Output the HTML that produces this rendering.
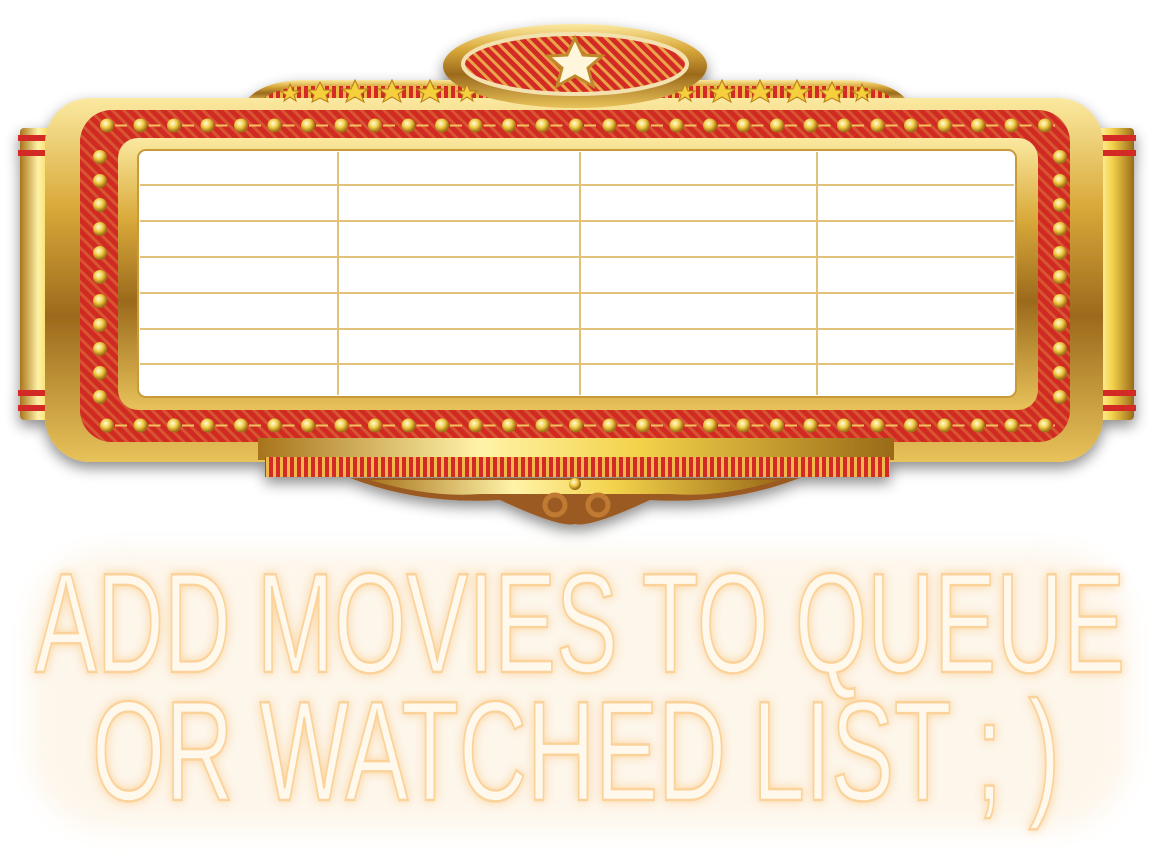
<!DOCTYPE html>
<html><head><meta charset="utf-8"><style>
html,body{margin:0;padding:0;background:#fff;}
svg{display:block}
</style></head><body>
<svg width="1152" height="864" viewBox="0 0 1152 864" xmlns="http://www.w3.org/2000/svg">
<defs>
<linearGradient id="gold" x1="0" y1="0" x2="0" y2="1">
<stop offset="0" stop-color="#fbe9a0"/><stop offset="0.3" stop-color="#d9a93a"/><stop offset="0.6" stop-color="#9c6a1c"/><stop offset="1" stop-color="#e8c25a"/></linearGradient>
<linearGradient id="goldH" x1="0" y1="0" x2="1" y2="0">
<stop offset="0" stop-color="#a8741c"/><stop offset="0.35" stop-color="#fff3a8"/><stop offset="0.6" stop-color="#f3d24a"/><stop offset="1" stop-color="#9a6a18"/></linearGradient>
<radialGradient id="bulb" cx="0.4" cy="0.35" r="0.6"><stop offset="0" stop-color="#fffbe0"/><stop offset="0.5" stop-color="#f2cf4a"/><stop offset="1" stop-color="#a06d12"/></radialGradient>
<pattern id="bh" x="100" y="118" width="33.5" height="15" patternUnits="userSpaceOnUse">
<rect x="15" y="6.5" width="12" height="2" fill="#f5c060"/>
<circle cx="7" cy="7.5" r="7" fill="url(#bulb)"/></pattern>
<pattern id="bv" x="0" y="150" width="40" height="24" patternUnits="userSpaceOnUse">
<circle cx="20" cy="7" r="7" fill="url(#bulb)"/></pattern>
<pattern id="stripes" width="8" height="8" patternUnits="userSpaceOnUse" patternTransform="rotate(-45)">
<rect width="8" height="8" fill="#d42b25"/><rect width="3" height="8" fill="#e9a44a"/></pattern>
<pattern id="vstr" width="7" height="10" patternUnits="userSpaceOnUse">
<rect width="7" height="10" fill="#d42b25"/><rect width="3" height="10" fill="#f0b848"/></pattern>
<filter id="sh" x="-10%" y="-10%" width="120%" height="130%"><feDropShadow dx="0" dy="6" stdDeviation="7" flood-color="#000" flood-opacity="0.45"/></filter>
<filter id="glow" x="-10%" y="-30%" width="120%" height="160%"><feGaussianBlur stdDeviation="12"/></filter>
</defs>

<rect x="30" y="550" width="1100" height="280" rx="80" fill="#fdf3e3" filter="url(#glow)" opacity="0.7"/>

<g filter="url(#sh)">
<path d="M245 102 Q260 82 300 80 L850 80 Q895 82 908 102 Z" fill="url(#gold)"/>
<path d="M262 100 Q275 88 305 86 L845 86 Q885 88 893 100 Z" fill="url(#vstr)"/>
<rect x="20" y="128" width="52" height="292" rx="4" fill="url(#goldH)"/>
<rect x="1080" y="128" width="54" height="292" rx="4" fill="url(#goldH)"/>
<rect x="18" y="135" width="56" height="6" fill="#d42b25"/><rect x="18" y="150" width="56" height="6" fill="#d42b25"/>
<rect x="18" y="390" width="56" height="6" fill="#d42b25"/><rect x="18" y="405" width="56" height="6" fill="#d42b25"/>
<rect x="1078" y="135" width="58" height="6" fill="#d42b25"/><rect x="1078" y="150" width="58" height="6" fill="#d42b25"/>
<rect x="1078" y="390" width="58" height="6" fill="#d42b25"/><rect x="1078" y="405" width="58" height="6" fill="#d42b25"/>
<rect x="45" y="98" width="1058" height="364" rx="45" fill="url(#gold)"/>
<rect x="80" y="110" width="990" height="332" rx="32" fill="#cf2a24"/>
<rect x="80" y="110" width="990" height="332" rx="32" fill="url(#stripes)" opacity="0.35"/>
<rect x="100" y="118" width="955" height="15" fill="url(#bh)"/>
<rect x="100" y="418" width="955" height="15" fill="url(#bh)"/>
<rect x="80" y="146" width="40" height="264" fill="url(#bv)"/>
<rect x="1032" y="146" width="40" height="264" fill="url(#bv)"/>
<rect x="118" y="138" width="920" height="272" rx="20" fill="url(#gold)"/>
<rect x="138" y="150" width="878" height="247" rx="8" fill="#fff" stroke="#c89a3a" stroke-width="2"/>
<rect x="258" y="438" width="636" height="22" fill="url(#goldH)"/>
<rect x="265" y="457" width="625" height="20" fill="url(#vstr)"/>
<path d="M350 478 Q420 505 500 500 Q560 528 575 524 Q590 528 650 500 Q730 505 800 478 Z" fill="#9a5a22"/>
<path d="M370 480 Q430 498 480 494 L670 494 Q720 498 780 480 Z" fill="url(#goldH)"/>
<circle cx="575" cy="484" r="6" fill="url(#bulb)"/>
<circle cx="555" cy="505" r="10" fill="none" stroke="#c07a30" stroke-width="5"/>
<circle cx="598" cy="505" r="10" fill="none" stroke="#c07a30" stroke-width="5"/>
<ellipse cx="575" cy="66" rx="132" ry="42" fill="url(#gold)"/>
<ellipse cx="575" cy="64" rx="112" ry="30" fill="url(#stripes)"/>
<ellipse cx="575" cy="64" rx="112" ry="30" fill="none" stroke="#f3e2b0" stroke-width="4"/>
<polygon points="575,38 583,55 602,56 588,68 593,86 575,76 557,86 562,68 548,56 567,55" fill="#fff6dc" stroke="#c08a2a" stroke-width="3"/>
</g>
<g fill="#f5cf3c" stroke="#b67c1a" stroke-width="1">
<polygon points="290,84 293,91 300,91 294,95 296,101 290,97 284,101 286,95 280,91 287,91"/>
<polygon points="320,82 324,90 332,90 326,95 328,102 320,98 312,102 314,95 308,90 316,90"/>
<polygon points="355,80 359,89 368,89 361,94 364,102 355,97 346,102 349,94 342,89 351,89"/>
<polygon points="392,80 396,89 405,89 398,94 401,102 392,97 383,102 386,94 379,89 388,89"/>
<polygon points="430,80 434,89 443,89 436,94 439,102 430,97 421,102 424,94 417,89 426,89"/>
<polygon points="467,84 470,91 477,91 471,95 473,101 467,97 461,101 463,95 457,91 464,91"/>
<polygon points="685,84 688,91 695,91 689,95 691,101 685,97 679,101 681,95 675,91 682,91"/>
<polygon points="722,80 726,89 735,89 728,94 731,102 722,97 713,102 716,94 709,89 718,89"/>
<polygon points="760,80 764,89 773,89 766,94 769,102 760,97 751,102 754,94 747,89 756,89"/>
<polygon points="797,80 801,89 810,89 803,94 806,102 797,97 788,102 791,94 784,89 793,89"/>
<polygon points="832,82 836,90 844,90 838,95 840,102 832,98 824,102 826,95 820,90 828,90"/>
<polygon points="862,84 865,91 872,91 866,95 868,101 862,97 856,101 858,95 852,91 859,91"/>
</g>
<g stroke="#e2c27a" stroke-width="2">
<line x1="140" y1="185" x2="1014" y2="185"/><line x1="140" y1="221" x2="1014" y2="221"/>
<line x1="140" y1="257" x2="1014" y2="257"/><line x1="140" y1="293" x2="1014" y2="293"/>
<line x1="140" y1="329" x2="1014" y2="329"/><line x1="140" y1="364" x2="1014" y2="364"/>
<line x1="338" y1="152" x2="338" y2="395"/><line x1="580" y1="152" x2="580" y2="395"/>
<line x1="817" y1="152" x2="817" y2="395"/>
</g>
<g font-family="'Liberation Sans Narrow','Liberation Sans',sans-serif" font-size="142" fill="#fff8ec" stroke="#fbd29a" stroke-width="2.5" style="filter:drop-shadow(0 0 5px #fad39c)">
<text x="35" y="672" textLength="1090" lengthAdjust="spacingAndGlyphs">ADD MOVIES TO  QUEUE</text>
<text x="92" y="800" textLength="968" lengthAdjust="spacingAndGlyphs">OR WATCHED LIST ; )</text>
</g>
</svg>
</body></html>
